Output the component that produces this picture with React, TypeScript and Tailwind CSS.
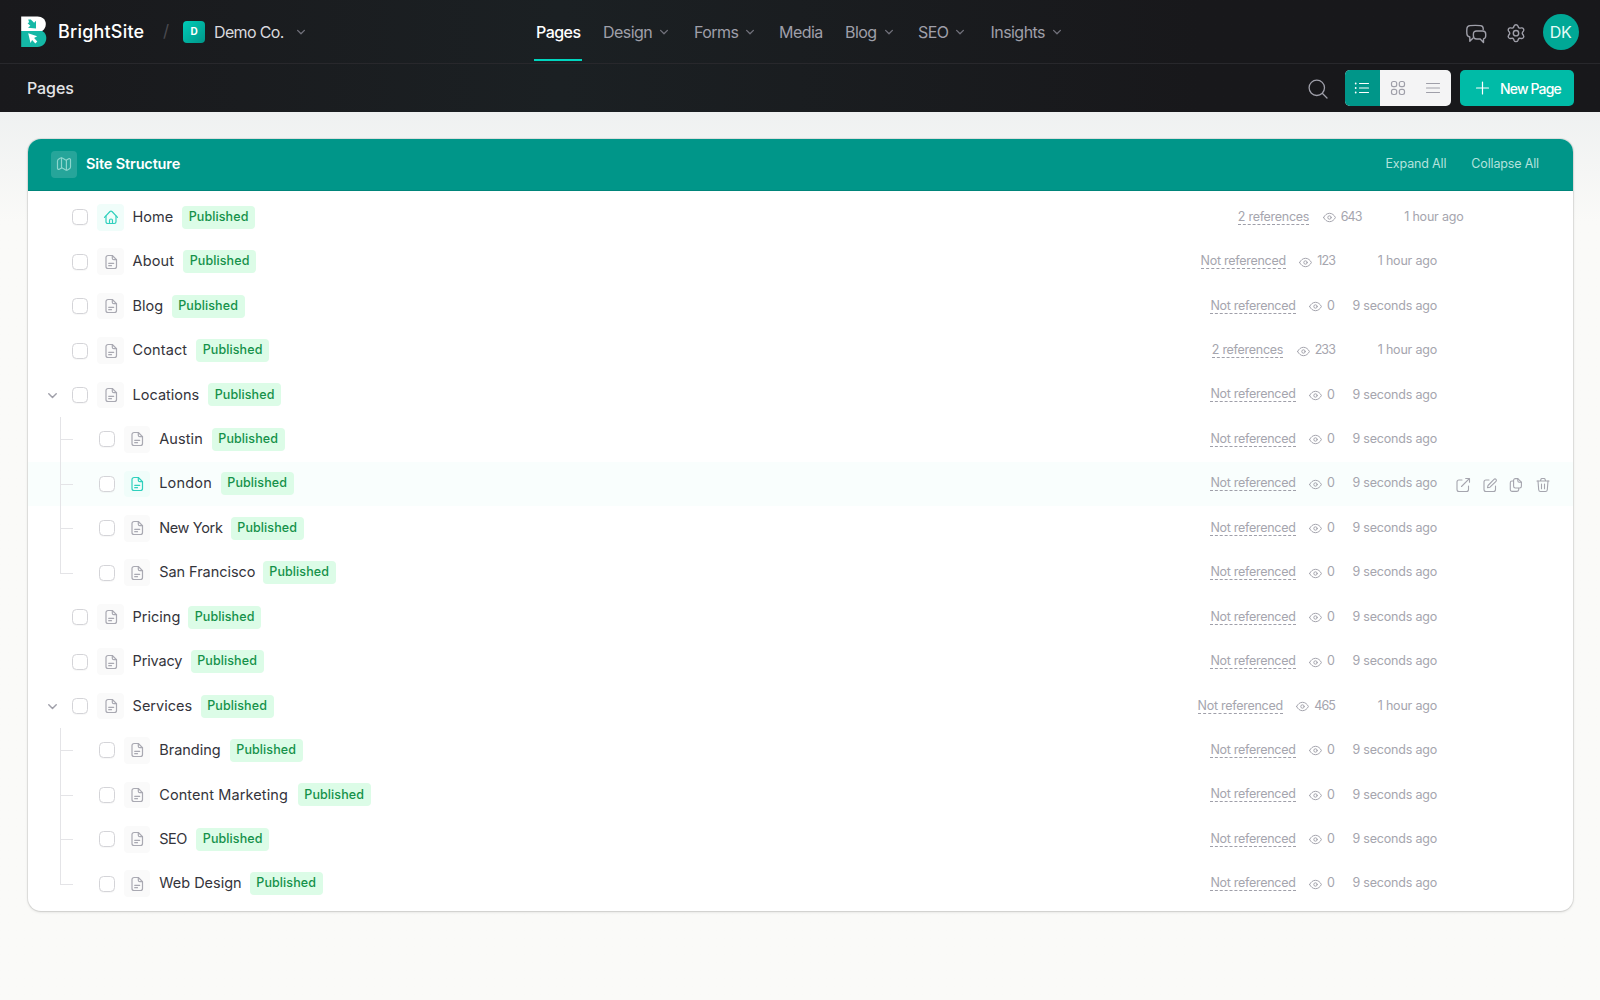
import React from "react";
import clsx from "clsx";

type Page = {
  name: string;
  slot: string; // label column, badge follows it
  refs?: number;
  views?: number;
  updated?: string;
  home?: boolean;
  open?: boolean;
  hovered?: boolean;
  branch?: "mid" | "last";
};

const pages: Page[] = [
  { name: "Home", slot: "w-[49.500px]", refs: 2, views: 643, updated: "1 hour ago", home: true },
  { name: "About", slot: "w-[50.500px] tracking-[0.100px]", views: 123, updated: "1 hour ago" },
  { name: "Blog", slot: "w-[39px]" },
  { name: "Contact", slot: "w-[63.500px] tracking-[0.100px]", refs: 2, views: 233, updated: "1 hour ago" },
  { name: "Locations", slot: "w-[75.500px]", open: true },
  { name: "Austin", slot: "w-[52.500px] tracking-[0.100px]", branch: "mid" },
  { name: "London", slot: "w-[61.500px] tracking-[0.200px]", branch: "mid", hovered: true },
  { name: "New York", slot: "w-[71.500px] tracking-[-0.350px]", branch: "mid" },
  { name: "San Francisco", slot: "w-[103.500px] tracking-[-0.050px]", branch: "last" },
  { name: "Pricing", slot: "w-[55.500px]" },
  { name: "Privacy", slot: "w-[58px] tracking-[-0.150px]" },
  { name: "Services", slot: "w-[68px]", views: 465, updated: "1 hour ago", open: true },
  { name: "Branding", slot: "w-[70.500px]", branch: "mid" },
  { name: "Content Marketing", slot: "w-[138.500px] tracking-[0.100px]", branch: "mid" },
  { name: "SEO", slot: "w-[37px] tracking-[-0.500px]", branch: "mid" },
  { name: "Web Design", slot: "w-[90.500px]", branch: "last" },
];

const navLinks = [
  { label: "Pages", width: "w-[67px]", active: true },
  { label: "Design", width: "w-[91px]", menu: true },
  { label: "Forms", width: "w-[85px]", menu: true },
  { label: "Media", width: "w-[66px]" },
  { label: "Blog", width: "w-[73px]", menu: true },
  { label: "SEO", width: "w-[72.500px]", menu: true },
  { label: "Insights", width: "w-[76px]", menu: true },
];

const Icon = ({
  className,
  size = 16,
  stroke = 1.2,
  children,
}: {
  className?: string;
  size?: number;
  stroke?: number;
  children: React.ReactNode;
}) => (
  <svg
    viewBox={`0 0 ${size} ${size}`}
    width={size}
    height={size}
    fill="none"
    stroke="currentColor"
    strokeWidth={stroke}
    strokeLinecap="round"
    strokeLinejoin="round"
    className={clsx("shrink-0", className)}
  >
    {children}
  </svg>
);

const Chevron = ({ className }: { className?: string }) => (
  <Icon size={10} stroke={1.3} className={className}>
    <path d="M1.600 3.400 5 6.800l3.400-3.400" />
  </Icon>
);

const FileIcon = () => (
  <Icon className="ml-px">
    <path d="M9.300 1.500H5a2 2 0 0 0-2 2v9a2 2 0 0 0 2 2h6.500a2 2 0 0 0 2-2V5.700L9.300 1.500Z" />
    <path d="M9.300 1.500v2.700c0 .8.700 1.500 1.500 1.500h2.700" />
    <path d="M5.700 9.300h5M5.700 11.700h2.800" />
  </Icon>
);

const HomeIcon = () => (
  <Icon className="ml-px">
    <path d="M1.500 8.400 7 2.500a1.400 1.400 0 0 1 2 0l5.500 5.900" />
    <path d="M3 7v5.800a1.700 1.700 0 0 0 1.700 1.700h6.600a1.700 1.700 0 0 0 1.700-1.700V7" />
    <path d="M6.500 14.300v-2.800a1.500 1.500 0 0 1 3 0v2.800" />
  </Icon>
);

const EyeIcon = () => (
  <Icon size={13} stroke={1}>
    <path d="M.6 6.500C1.800 4 4 2.300 6.500 2.300S11.200 4 12.400 6.500c-1.200 2.500-3.400 4.200-5.900 4.200S1.800 9 .6 6.500Z" />
    <circle cx="6.500" cy="6.500" r="1.700" />
  </Icon>
);

const Logo = () => (
  <svg viewBox="0 0 26 32" className="h-8 w-[26px] shrink-0">
    <path d="M.2.500h16.300c4.600 0 8.300 3 8.300 7.400 0 3.100-1.400 5.500-3.600 7H.2Z" fill="#fff" />
    <path d="M.2 14.900h21c2.500 1.300 4.100 3.800 4.100 7.100 0 5.200-3.800 9-8.800 9H.2Z" fill="#14b8a6" />
    <path d="M7.200 3.400 9.800 3.400l3.300 3.400 1.900-2v7.700l-8-.8 2.300-2L6.600 7.200l1.500-1Z" fill="#14b8a6" />
    <path d="m7.200 17.200 9 3-3.100 1.900 3.200 3.400-2 1.900-3.200-3.400-1.600 3Z" fill="#fff" />
  </svg>
);

const RowActions = () => (
  <div className="ml-[18px] flex gap-[10.600px] pt-[3px] text-[#a5a5ae]">
    <Icon stroke={1.1}>
      <path d="M7 3H4a2 2 0 0 0-2 2v7.500a2 2 0 0 0 2 2h7.500a2 2 0 0 0 2-2V9" />
      <path d="M6.500 9.500 14.300 1.700M10.700 1.500h3.800v3.800" />
    </Icon>
    <Icon stroke={1.1}>
      <path d="M7 3H4a2 2 0 0 0-2 2v7.500a2 2 0 0 0 2 2h7.500a2 2 0 0 0 2-2V9" />
      <path d="m6 8.500 6-6.200a1.400 1.400 0 0 1 2 2L8 10.200l-2.500.500.500-2.200Z" />
    </Icon>
    <Icon stroke={1.1}>
      <path d="M9.800 1.600H7.300a1.700 1.700 0 0 0-1.700 1.700v6a1.700 1.700 0 0 0 1.700 1.700h4.400a1.700 1.700 0 0 0 1.700-1.700V5.200L9.800 1.600Z" />
      <path d="M9.800 1.600v2.200c0 .8.600 1.400 1.400 1.400h2.200M5.400 4H4a1.700 1.700 0 0 0-1.700 1.700v6.800A1.900 1.900 0 0 0 4.200 14.400h4.600a2 2 0 0 0 1.900-1.600v-1.600" />
    </Icon>
    <Icon stroke={1.1}>
      <path d="M2 4h12M5.400 4l.500-1.700c.1-.5.500-.8 1-.8h2.200c.5 0 .9.300 1 .8l.5 1.700" />
      <path d="m3 4 .7 8.800c.1 1 .9 1.700 1.800 1.700h5c1 0 1.700-.7 1.800-1.700L13 4M6.500 7v4.700M9.500 7v4.700" />
    </Icon>
  </div>
);

const PageRow = ({ page }: { page: Page }) => (
  <div
    className={clsx(
      "flex h-[44.450px] items-center",
      page.hovered && "bg-[#f9fefd]",
    )}
  >
    {page.branch ? (
      <div className="ml-[31.500px] flex h-full w-[39.500px] shrink-0">
        <div
          className={clsx(
            "w-px bg-[#e4e4e7]",
            page.branch === "last" ? "h-[23px]" : "h-full",
          )}
        />
        <div className="mt-[22px] h-px w-3 bg-[#e4e4e7]" />
      </div>
    ) : (
      <div className="flex w-[44.400px] shrink-0 pl-[19px] pt-px">
        {page.open && <Chevron className="size-[11px] text-[#9f9fa9]" />}
      </div>
    )}
    <div className="size-4 shrink-0 rounded-[4.500px] border border-[#d4d4d8] bg-white shadow-[0_1px_1px_rgba(0,0,0,0.03)]" />
    <div
      className={clsx(
        "ml-[8.600px] flex size-[26.600px] shrink-0 items-center justify-center rounded-[4px]",
        page.home || page.hovered
          ? "bg-[#f0fdfa] text-[#2fd0bd]"
          : "bg-[#fafafa] text-[#a9a9b2]",
      )}
    >
      {page.home ? <HomeIcon /> : <FileIcon />}
    </div>
    <div
      className={clsx(
        "mb-px ml-[9px] shrink-0 whitespace-nowrap text-[14.500px] text-[#34343b]",
        page.slot,
      )}
    >
      {page.name}
    </div>
    <div className="flex h-[23px] w-[73px] shrink-0 items-center justify-center rounded-[4px] bg-[#dcfce7] text-[12.500px] font-medium tracking-[0.100px] text-[#15914a]">
      Published
    </div>

    <div
      className={clsx(
        "ml-auto flex items-center whitespace-nowrap text-[12.500px] text-[#a5a5ae]",
        page.home ? "mr-[109.500px]" : !page.hovered && "mr-[136px]",
      )}
    >
      <span className="border-b border-dashed border-[#9f9fa9] leading-[14px] tracking-[-0.280px]">
        {page.refs ? `${page.refs} references` : "Not referenced"}
      </span>
      <span className="ml-[13.500px] mr-[5px] mt-px">
        <EyeIcon />
      </span>
      <span className={clsx(page.views && "tracking-[-0.900px]")}>{page.views ?? 0}</span>
      <span className="w-[102px] text-right tracking-[-0.200px]">{page.updated ?? "9 seconds ago"}</span>
    </div>
    {page.hovered && (
      <div className="w-[136px] shrink-0">
        <RowActions />
      </div>
    )}
  </div>
);

const Header = () => (
  <header className="h-[111.500px] bg-gradient-to-r from-[#19191c] via-[#1b2023] via-35% to-[#18181b] to-75%">
    <div className="flex h-16 items-center border-b border-[#28282c] pl-[21px] pr-[21.500px]">
      <div className="flex w-[515px] shrink-0 items-center">
        <Logo />
        <span className="ml-[11px] w-[105px] text-[18px] font-medium tracking-[0.200px] text-white">BrightSite</span>
        <span className="w-[20px] text-[17px] text-[#4a4a50]">/</span>
        <span className="flex size-[22px] items-center justify-center rounded-[4px] bg-gradient-to-br from-[#00cdb8] to-[#009689] text-[10px] font-bold text-white">
          D
        </span>
        <span className="ml-[9px] w-[81.500px] whitespace-nowrap text-[16px] tracking-[-0.650px] text-[#d9d9dd]">Demo Co.</span>
        <Chevron className="text-[#71717b]" />
      </div>
      <nav className="flex h-full">
        {navLinks.map((link) => (
          <div
            key={link.label}
            className={clsx(
              "relative flex shrink-0 items-center whitespace-nowrap text-[16px] tracking-[-0.550px]",
              link.width,
              link.active ? "font-medium text-white" : "text-[#9f9fa9]",
            )}
          >
            {link.label}
            {link.menu && <Chevron className="ml-[7px] mt-px text-[#71717b]" />}
            {link.active && <span className="absolute bottom-[2px] left-[-2px] h-[2px] w-12 bg-[#00d5be]" />}
          </div>
        ))}
      </nav>
      <div className="ml-auto flex items-center text-[#9f9fa9]">
        <Icon size={22} stroke={1.4} className="mt-1">
          <path d="M18.200 6.500V5.500c0-1.700-1-2.700-2.700-2.900a52 52 0 0 0-10.600 0c-1.700.2-2.800 1.200-3 2.900a24 24 0 0 0 0 5.500c.2 1.700 1.200 2.700 2.900 2.900v4.300l3-3" />
          <path d="M11.600 8h6c2.100 0 3.100 1 3.100 2.900v2.200c0 1.600-.7 2.500-2.200 2.800v3.600l-3.300-3.500h-3.600c-2.100 0-3.200-1-3.200-3v-2.100c0-1.900 1.100-2.900 3.200-2.900Z" />
        </Icon>
        <Icon size={22} stroke={1.4} className="ml-[18.500px] mt-1">
          <path d="M9.100 2.900c.3-.8.900-1.100 1.900-1.100s1.600.3 1.900 1.100l.4 1.200c.4.800 1.100 1.200 1.900 1l1.300-.2c.8-.1 1.500.2 2 1s.4 1.500-.1 2.200l-.8 1c-.5.700-.5 1.500 0 2.200l.8 1c.5.700.6 1.400.1 2.200s-1.200 1.100-2 1l-1.300-.2c-.8-.2-1.500.2-1.900 1l-.4 1.200c-.3.800-.9 1.100-1.900 1.100s-1.600-.3-1.900-1.100l-.4-1.200c-.4-.8-1.100-1.200-1.900-1l-1.300.2c-.8.100-1.500-.2-2-1s-.4-1.500.1-2.200l.8-1c.5-.7.500-1.500 0-2.200l-.8-1c-.5-.7-.6-1.400-.1-2.200s1.200-1.100 2-1l1.300.2c.8.200 1.500-.2 1.900-1Z" />
          <circle cx="11" cy="10.200" r="2.700" />
        </Icon>
        <div className="ml-[15.500px] flex size-[36px] items-center justify-center rounded-full bg-[#00a896] text-[16px] tracking-[-0.500px] text-[#e6fbf7]">DK</div>
      </div>
    </div>
    <div className="flex h-[48.500px] items-center pl-[27px] pr-[26px]">
      <h1 className="text-[16px] font-medium tracking-[-0.100px] text-[#e4e4e7]">Pages</h1>
      <div className="ml-auto flex items-center">
        <Icon size={22} stroke={1.3} className="mr-[15.500px] mt-[2px] text-[#9f9fa9]">
          <circle cx="9.800" cy="9.800" r="7.700" />
          <path d="m15.500 15.500 4.500 4.500" />
        </Icon>
        <div className="flex h-9 overflow-hidden rounded-[5px] bg-[#f4f4f5] text-[#9f9fa9]">
          <div className="flex w-[35.500px] items-center justify-center bg-[#009689] text-white">
            <Icon>
              <path d="M5.500 3.500h9M5.500 8h9M5.500 12.500h9" />
              <path d="M1.700 3.500h.01M1.700 8h.01M1.700 12.500h.01" strokeWidth="1.800" />
            </Icon>
          </div>
          <div className="flex w-[35.500px] items-center justify-center">
            <Icon>
              <rect x="1.500" y="1.500" width="5.200" height="5.200" rx="1.900" />
              <rect x="9.300" y="1.500" width="5.200" height="5.200" rx="1.900" />
              <rect x="1.500" y="9.300" width="5.200" height="5.200" rx="1.900" />
              <rect x="9.300" y="9.300" width="5.200" height="5.200" rx="1.900" />
            </Icon>
          </div>
          <div className="flex w-[35.500px] items-center justify-center">
            <Icon>
              <path d="M1.500 3.500h13M1.500 8h13M1.500 12.500h13" />
            </Icon>
          </div>
        </div>
        <button className="ml-[9px] flex h-9 w-[114px] items-center whitespace-nowrap rounded-[5px] bg-[#00bba7] pl-[15px] text-[14px] font-medium tracking-[-0.850px] text-white">
          <Icon className="mr-[9px]">
            <path d="M7.500 2v12M1.500 8h12" />
          </Icon>
          New Page
        </button>
      </div>
    </div>
  </header>
);

export default function App() {
  return (
    <div className="h-[1000px] w-[1600px] overflow-hidden bg-[#fafaf8] font-['Inter',sans-serif]">
      <Header />
      <main className="h-[889px] bg-gradient-to-b from-[#eff1f1] to-[#fafaf8] to-[110px] px-[28px] pt-[27.500px]">
        <section className="h-[772px] w-[1545px] overflow-hidden rounded-[13px] bg-white shadow-[0_0_0_1px_rgba(0,0,0,0.07),0_1px_3px_rgba(0,0,0,0.14)]">
          <div className="flex h-[51.500px] items-center border-b border-[#00857a] bg-[#009689] pl-[22.500px] pr-[34px]">
            <div className="flex size-[26.600px] items-center justify-center rounded-[4px] bg-white/15 text-[#8cd6cd]">
              <Icon>
                <path d="M1.500 5c0-.8.300-1.300 1-1.700l2-1.200c.6-.4 1.200-.4 1.800 0l2.900 1.700c.6.400 1.200.4 1.800 0l1.700-1c.9-.5 1.800 0 1.800 1V11c0 .8-.3 1.300-1 1.700l-2 1.200c-.6.400-1.200.4-1.800 0l-2.900-1.700c-.6-.4-1.200-.4-1.800 0l-1.700 1c-.9.500-1.800 0-1.800-1Z" />
                <path d="M5.500 2.200v9.500M10.400 4.300v9.500" />
              </Icon>
            </div>
            <h2 className="ml-[9px] text-[14.500px] font-semibold tracking-[-0.150px] text-white">Site Structure</h2>
            <div className="ml-auto flex gap-[25px] pt-px text-[12.500px] tracking-[-0.150px] text-[#b4e2dd]">
              <span>Expand All</span>
              <span>Collapse All</span>
            </div>
          </div>
          <div className="pt-[4.500px]">
            {pages.map((page) => (
              <PageRow key={page.name} page={page} />
            ))}
          </div>
        </section>
      </main>
    </div>
  );
}
